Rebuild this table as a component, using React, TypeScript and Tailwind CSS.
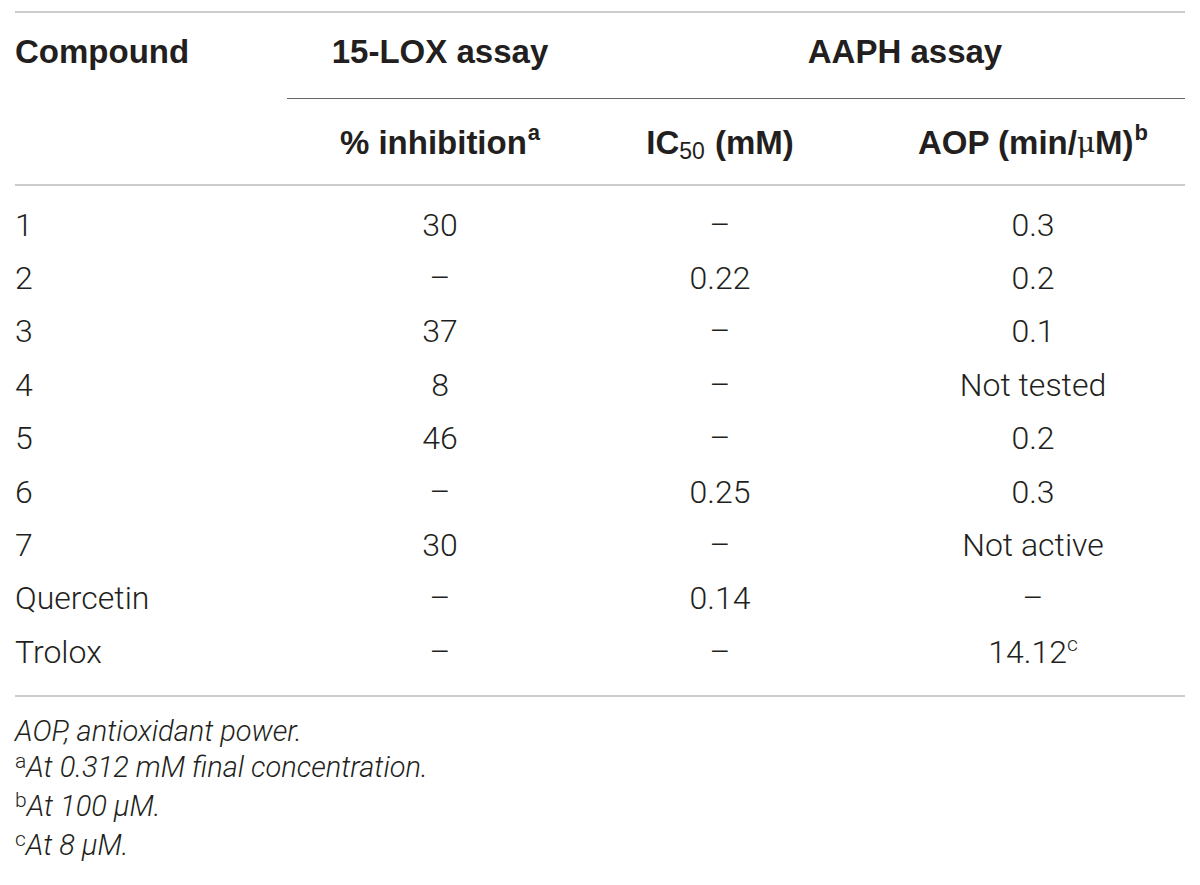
const rows: [string, string, string, React.ReactNode][] = [
  ["1", "30", "–", "0.3"],
  ["2", "–", "0.22", "0.2"],
  ["3", "37", "–", "0.1"],
  ["4", "8", "–", "Not tested"],
  ["5", "46", "–", "0.2"],
  ["6", "–", "0.25", "0.3"],
  ["7", "30", "–", "Not active"],
  ["Quercetin", "–", "0.14", "–"],
  [
    "Trolox",
    "–",
    "–",
    <>
      14.12<span className="text-[21px] font-light relative -top-[12px]">c</span>
    </>,
  ],
];

const head = "font-['Liberation_Sans',Arial,sans-serif] font-bold text-[33px]";

export default function App() {
  return (
    <div className="w-[1200px] h-[885px] bg-white text-[#231f20] font-['Roboto',sans-serif]">
      <div className="pt-[11px] pl-[15px] w-[1185px]">
        {/* header */}
        <div className="border-t-2 border-[#cccccc]">
          <div className="grid grid-cols-[272px_306px_254px_338px] h-[86px]">
            <div className={`${head} flex items-center pb-[8px]`}>Compound</div>
            <div className={`${head} flex items-center justify-center pb-[8px] border-b border-[#666666]`}>
              15-LOX assay
            </div>
            <div className={`${head} col-span-2 flex items-center justify-center pl-[32px] pb-[8px] border-b border-[#666666]`}>
              AAPH assay
            </div>
          </div>
          <div className="grid grid-cols-[272px_306px_254px_338px] h-[87px] border-b-2 border-[#cccccc]">
            <div />
            <div className={`${head} flex items-center justify-center pt-[3px]`}>
              % inhibition<span className="text-[22px] relative -top-[11px] ml-[1px]">a</span>
            </div>
            <div className={`${head} flex items-center justify-center pt-[3px]`}>
              IC<span className="text-[23px] font-normal relative top-[8px]">50</span>
              <span className="ml-[10px]">(mM)</span>
            </div>
            <div className={`${head} flex items-center justify-center pl-[34px] pt-[3px]`}>
              AOP (min/<span className="font-normal font-['DejaVu_Serif',serif] text-[28px]">μ</span>M)
              <span className="text-[22px] relative -top-[11px] ml-[1px]">b</span>
            </div>
          </div>
        </div>

        {/* body */}
        <div className="pt-[12px] pb-[16px] border-b-2 border-[#cccccc] font-light text-[32px]">
          {rows.map((r, i) => (
            <div key={i} className="grid grid-cols-[272px_306px_254px_338px] h-[53.4px] items-center">
              <div>{r[0]}</div>
              <div className="text-center">{r[1]}</div>
              <div className="text-center">{r[2]}</div>
              <div className="text-center pl-[34px]">{r[3]}</div>
            </div>
          ))}
        </div>

        {/* notes */}
        <div className="pt-[16px] text-[29px] leading-[36px] font-light">
          <div className="italic">AOP, antioxidant power.</div>
          <div>
            <span className="text-[21px] relative -top-[9px]">a</span>
            <span className="italic">At 0.312 mM final concentration.</span>
          </div>
          <div>
            <span className="text-[21px] relative -top-[9px]">b</span>
            <span className="italic">At 100 μM.</span>
          </div>
          <div>
            <span className="text-[21px] relative -top-[9px]">c</span>
            <span className="italic">At 8 μM.</span>
          </div>
        </div>
      </div>
    </div>
  );
}
